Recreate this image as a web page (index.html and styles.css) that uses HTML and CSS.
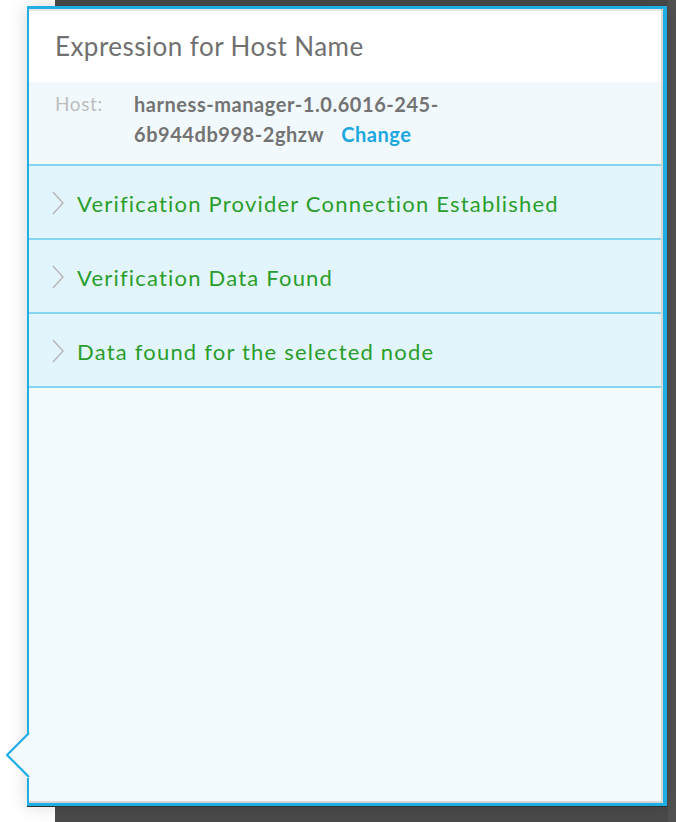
FILE: index.html
```html
<!DOCTYPE html>
<html>
<head>
<meta charset="utf-8">
<link rel="stylesheet" href="styles.css">
</head>
<body>
<div class="page">
  <div class="gutter"></div>
  <div class="backdrop"></div>
  <div class="track"></div>

  <div class="popover">
    <div class="header">
      <h1 class="title">Expression for Host Name</h1>
    </div>
    <div class="host">
      <div class="host-label">Host:</div>
      <div class="host-value">harness-manager-1.0.6016-245-<br>6b944db998-2ghzw<a class="change">Change</a></div>
    </div>
    <div class="row">
      <svg class="chev" width="12" height="24" viewBox="0 0 12 24"><polyline points="1,1 11,12 1,23" fill="none" stroke="#b9b9b9" stroke-width="1.6"/></svg>
      <span class="row-text">Verification Provider Connection Established</span>
    </div>
    <div class="row">
      <svg class="chev" width="12" height="24" viewBox="0 0 12 24"><polyline points="1,1 11,12 1,23" fill="none" stroke="#b9b9b9" stroke-width="1.6"/></svg>
      <span class="row-text">Verification Data Found</span>
    </div>
    <div class="row">
      <svg class="chev" width="12" height="24" viewBox="0 0 12 24"><polyline points="1,1 11,12 1,23" fill="none" stroke="#b9b9b9" stroke-width="1.6"/></svg>
      <span class="row-text">Data found for the selected node</span>
    </div>
    <div class="rest"></div>

    <svg class="pointer" width="25" height="48" viewBox="0 0 25 48">
      <rect x="21" y="2" width="4" height="44" fill="#f2fafd"/>
      <polygon points="23,1 1,23 23,45" fill="#f2fafd"/>
      <polyline points="23,1 1,23 23,45" fill="none" stroke="#1eaee4" stroke-width="2.2"/>
    </svg>
  </div>
</div>
</body>
</html>
```

FILE: styles.css
```css
html, body {
  margin: 0;
  padding: 0;
  background: #ffffff;
}

.page {
  position: relative;
  display: flex;
  width: 676px;
  height: 822px;
  overflow: hidden;
  font-family: Lato, "Open Sans", sans-serif;
}

.gutter {
  width: 55px;
  background: #ffffff;
}

.backdrop {
  flex: 1;
  background: #4a4a4a;
}

.track {
  width: 8px;
  background: #525252;
}

.popover {
  position: absolute;
  left: 27px;
  top: 6px;
  width: 634px;
  height: 794px;
  border-style: solid;
  border-color: #1eaee4;
  border-width: 3px 4px 3px 2px;
  background: #f2fafd;
  display: flex;
  flex-direction: column;
  box-shadow: 0 0 18px rgba(0, 0, 0, 0.16), 0 1px 0 #333;
}

.popover::after {
  content: "";
  position: absolute;
  inset: 0;
  pointer-events: none;
  box-shadow: inset -2px -2px 0 #d6d6d6, inset 0 2px 0 #e6e6e6;
}

.header {
  background: #ffffff;
  height: 73px;
  padding-left: 26px;
  display: flex;
  align-items: center;
}

.title {
  margin: 0;
  font-weight: 400;
  font-size: 26px;
  color: #707070;
  letter-spacing: 0.45px;
}

.host {
  height: 84px;
  box-sizing: border-box;
  background: #f1f9fc;
  border-bottom: 2px solid #86d4ef;
  display: flex;
  padding: 7px 0 0 26px;
}

.host-label {
  width: 79px;
  font-size: 19px;
  line-height: 30px;
  color: #bdbdbd;
  letter-spacing: 0.6px;
}

.host-value {
  font-size: 20px;
  line-height: 30px;
  font-weight: 700;
  color: #737373;
  letter-spacing: 0.55px;
}

.change {
  color: #1ca7df;
  margin-left: 17px;
}

.row {
  height: 74px;
  box-sizing: border-box;
  background: #e2f5fc;
  border-bottom: 2px solid #86d4ef;
  display: flex;
  align-items: center;
  padding-left: 23px;
  padding-top: 2px;
}

.chev {
  flex: none;
  margin-right: 13px;
}

.row-text {
  font-size: 22px;
  color: #2a9e2a;
  letter-spacing: 1.2px;
}

.rest {
  flex: 1;
}

.pointer {
  position: absolute;
  left: -23px;
  top: 723px;
}
```
